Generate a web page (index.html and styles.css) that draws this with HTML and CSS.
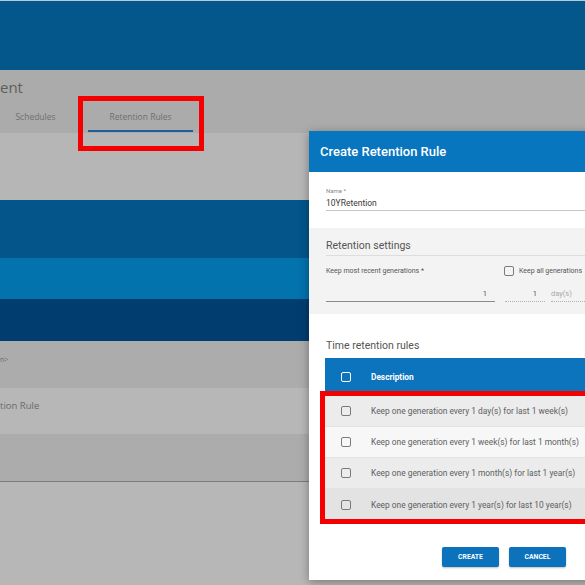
FILE: index.html
```html
<!DOCTYPE html>
<html lang="en">
<head>
<meta charset="utf-8">
<title>Create Retention Rule</title>
<link rel="stylesheet" href="styles.css">
</head>
<body>
<div class="page">
  <div class="topbar"></div>
  <div class="titlebar">
    <div class="title">ent</div>
    <div class="tabs">
      <div class="tab">Schedules</div>
      <div class="tab active">Retention Rules</div>
    </div>
  </div>
  <div class="content">
    <div class="band band-light"></div>
    <div class="band band-blue1"></div>
    <div class="band band-blue2"></div>
    <div class="band band-blue3"></div>
    <div class="row row-dark"><span class="row-text small">n&gt;</span></div>
    <div class="row row-light"><span class="row-text">tion Rule</span></div>
    <div class="row row-dark row-last"></div>
    <div class="rest"></div>
  </div>
</div>

<div class="annot annot-tab"></div>

<div class="modal">
  <div class="modal-header">Create Retention Rule</div>
  <div class="name-field">
    <div class="field-label">Name *</div>
    <div class="field-value">10YRetention</div>
  </div>
  <div class="settings">
    <div class="settings-title">Retention settings</div>
    <div class="settings-row">
      <div class="col1 small-label">Keep most recent generations *</div>
      <div class="col2">
        <span class="cb"></span>
        <span class="small-label">Keep all generations</span>
      </div>
    </div>
    <div class="inputs-row">
      <div class="input input-main">1</div>
      <div class="input input-dis">1</div>
      <div class="input input-unit">day(s)</div>
    </div>
  </div>
  <div class="rules">
    <div class="rules-title">Time retention rules</div>
    <div class="table">
      <div class="thead">
        <span class="cb cb-white"></span>
        <span class="th">Description</span>
      </div>
      <div class="tr tr-a"><span class="cb"></span><span class="td">Keep one generation every 1 day(s) for last 1 week(s)</span></div>
      <div class="tr tr-b"><span class="cb"></span><span class="td">Keep one generation every 1 week(s) for last 1 month(s)</span></div>
      <div class="tr tr-a"><span class="cb"></span><span class="td">Keep one generation every 1 month(s) for last 1 year(s)</span></div>
      <div class="tr tr-c"><span class="cb"></span><span class="td">Keep one generation every 1 year(s) for last 10 year(s)</span></div>
    </div>
  </div>
  <div class="footer">
    <button class="btn">CREATE</button>
    <button class="btn">CANCEL</button>
  </div>
</div>

<div class="annot annot-rows"></div>
</body>
</html>
```

FILE: styles.css
```css
* { box-sizing: border-box; }
html, body {
  margin: 0;
  padding: 0;
  width: 585px;
  height: 585px;
  overflow: hidden;
  font-family: Roboto, "Liberation Sans", Arial, sans-serif;
  background: #b2b2b2;
}
.page {
  width: 585px;
  height: 585px;
  display: flex;
  flex-direction: column;
}
.topbar {
  height: 70px;
  background: #03578a;
  border-top: 1px solid #b9c9d6;
  flex: none;
}
.titlebar {
  height: 63px;
  background: #ababab;
  flex: none;
  padding-top: 7px;
}
.title {
  font-size: 15px;
  line-height: 20px;
  color: #5e5e5e;
  font-family: "Open Sans", Roboto, sans-serif;
}
.tabs {
  display: flex;
  margin-left: -17px;
}
.tab {
  width: 105px;
  height: 35px;
  padding-top: 14px;
  line-height: 12px;
  text-align: center;
  font-size: 8.5px;
  color: #6f6f6f;
  border-bottom: 2px solid transparent;
  font-family: "Open Sans", Roboto, sans-serif;
}
.tab.active {
  border-bottom-color: #215d98;
}
.content {
  flex: 1;
  display: flex;
  flex-direction: column;
}
.band { flex: none; }
.band-light { height: 67px; background: #b6b6b6; }
.band-blue1 { height: 58px; background: #03558a; }
.band-blue2 { height: 41px; background: #0373ad; }
.band-blue3 { height: 42px; background: #023d70; }
.row {
  flex: none;
  padding-top: 10px;
  line-height: 12px;
}
.row-dark { height: 47px; background: #acacac; }
.row-light { height: 46px; background: #b7b7b7; }
.row-last { border-bottom: 1px solid #7c7c7c; height: 48px; }
.row-text {
  font-size: 9.5px;
  color: #6a6a6a;
  font-family: "Open Sans", Roboto, sans-serif;
}
.row-text.small { font-size: 7px; }
.rest { flex: 1; background: #b7b7b7; }

.annot {
  position: absolute;
  border: 5px solid #f40000;
}
.annot-tab {
  left: 78px;
  top: 96px;
  width: 126px;
  height: 55px;
}
.annot-rows {
  left: 320px;
  top: 391px;
  width: 280px;
  height: 133px;
}

.modal {
  position: absolute;
  left: 309px;
  top: 131px;
  width: 290px;
  background: #ffffff;
  box-shadow: 0 2px 9px rgba(0, 0, 0, 0.35);
}
.modal-header {
  height: 41px;
  line-height: 41px;
  padding-left: 11px;
  background: #0875bf;
  color: #ffffff;
  font-size: 13px;
  font-weight: 500;
}
.name-field {
  margin: 15px 0 17px 17px;
  padding-bottom: 2px;
  border-bottom: 1px solid #c6c6c6;
}
.field-label {
  font-size: 6px;
  line-height: 8px;
  color: #8a8a8a;
}
.field-value {
  margin-top: 3px;
  font-size: 8.5px;
  line-height: 10px;
  color: #3a3a3a;
}
.settings {
  background: #f3f3f3;
  padding: 11px 0 12px 17px;
}
.settings-title {
  font-size: 10.5px;
  line-height: 14px;
  color: #555555;
  padding-bottom: 2px;
  border-bottom: 1px solid #dddddd;
}
.settings-row {
  display: flex;
  align-items: center;
  margin-top: 10px;
  height: 10px;
}
.small-label {
  font-size: 7px;
  color: #555555;
  white-space: nowrap;
}
.col1 { width: 178px; flex: none; }
.col2 {
  display: flex;
  align-items: center;
  gap: 5px;
}
.cb {
  display: inline-block;
  width: 10px;
  height: 10px;
  border: 1.5px solid #7a7a7a;
  border-radius: 2px;
  flex: none;
}
.cb-white { border-color: #ffffff; }
.inputs-row {
  display: flex;
  margin-top: 13px;
}
.input {
  font-size: 7.5px;
  line-height: 10px;
  padding-bottom: 2px;
  color: #555555;
}
.input-main {
  width: 169px;
  text-align: right;
  padding-right: 8px;
  border-bottom: 1px solid #8c8c8c;
}
.input-dis {
  margin-left: 10px;
  width: 40px;
  text-align: right;
  padding-right: 8px;
  border-bottom: 1px dotted #b0b0b0;
}
.input-unit {
  margin-left: 6px;
  width: 40px;
  color: #a8a8a8;
  border-bottom: 1px dotted #b0b0b0;
}
.rules {
  padding: 25px 0 0 16px;
}
.rules-title {
  font-size: 10.5px;
  line-height: 14px;
  color: #555555;
  padding-left: 1px;
}
.table {
  margin-top: 5px;
}
.thead {
  height: 38px;
  background: #0b74bd;
  display: flex;
  align-items: center;
  padding-left: 16px;
  gap: 20px;
}
.th {
  font-size: 8.3px;
  font-weight: 700;
  color: #ffffff;
}
.tr {
  height: 31px;
  display: flex;
  align-items: center;
  padding-left: 16px;
  gap: 20px;
  border-bottom: 1px solid #e2e2e2;
}
.tr-a { background: #ececec; }
.tr-b { background: #f7f7f7; }
.tr-c { background: #e3e3e3; border-bottom: none; }
.td {
  font-size: 8.4px;
  color: #606060;
  white-space: nowrap;
}
.footer {
  display: flex;
  justify-content: flex-end;
  gap: 10px;
  padding: 27px 33px 13px 0;
}
.btn {
  width: 57px;
  height: 20px;
  border: none;
  border-radius: 2px;
  background: #0b72bb;
  color: #ffffff;
  font-family: Roboto, sans-serif;
  font-size: 6.8px;
  font-weight: 700;
  padding: 0;
  box-shadow: 0 1px 2px rgba(0, 0, 0, 0.25);
}
```
